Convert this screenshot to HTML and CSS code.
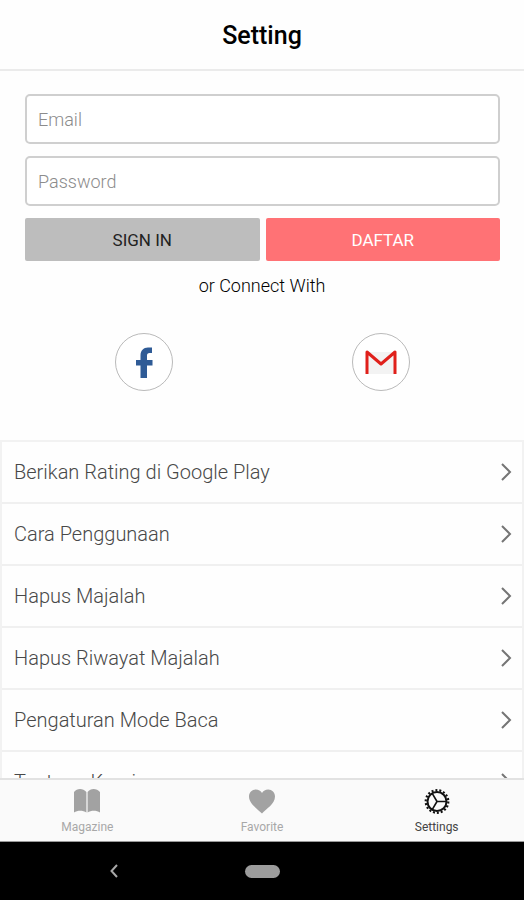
FILE: index.html
```html
<!DOCTYPE html>
<html lang="id">
<head>
<meta charset="utf-8">
<meta name="viewport" content="width=device-width, initial-scale=1">
<title>Setting</title>
<link rel="stylesheet" href="styles.css">
</head>
<body>
<header class="header"><h1 class="title">Setting</h1></header>
<main class="content">
  <form class="login">
    <input class="field" type="email" placeholder="Email" aria-label="Email">
    <input class="field" type="password" placeholder="Password" aria-label="Password">
    <div class="actions">
      <button class="button" type="button">SIGN IN</button>
      <button class="button button-primary" type="button">DAFTAR</button>
    </div>
  </form>
  <p class="connect">or Connect With</p>
  <div class="social">
    <button class="social-button" type="button" aria-label="Facebook">
      <svg width="56" height="56" viewBox="0 0 56 56"><path fill="#2f5b96" d="M24.500 44V31.500H20V26h4.500v-4.500c0-5 3-8 7.500-8h4v5.500h-2.500c-1.800 0-2.500 1-2.500 2.500V26h5.500v5.500H31V44z"/></svg>
    </button>
    <button class="social-button" type="button" aria-label="Gmail">
      <svg width="56" height="56" viewBox="0 0 56 56"><path fill="#f3f3f3" d="M14 18h27v22H14z"/><path fill="none" stroke="#e0201b" stroke-width="3" stroke-linejoin="round" d="M14 40V18l14 12 14-12v22"/></svg>
    </button>
  </div>
  <nav class="menu" aria-label="Setting">
    <a class="row" href="#rating">Berikan Rating di Google Play<svg class="chevron" viewBox="0 0 11 18"><path d="M1 1l8 8-8 8"/></svg></a>
    <a class="row" href="#cara">Cara Penggunaan<svg class="chevron" viewBox="0 0 11 18"><path d="M1 1l8 8-8 8"/></svg></a>
    <a class="row" href="#hapus">Hapus Majalah<svg class="chevron" viewBox="0 0 11 18"><path d="M1 1l8 8-8 8"/></svg></a>
    <a class="row" href="#riwayat">Hapus Riwayat Majalah<svg class="chevron" viewBox="0 0 11 18"><path d="M1 1l8 8-8 8"/></svg></a>
    <a class="row" href="#mode">Pengaturan Mode Baca<svg class="chevron" viewBox="0 0 11 18"><path d="M1 1l8 8-8 8"/></svg></a>
    <a class="row" href="#tentang">Tentang Kami<svg class="chevron" viewBox="0 0 11 18"><path d="M1 1l8 8-8 8"/></svg></a>
  </nav>
</main>
<nav class="tabs" aria-label="Tab">
  <a class="tab" href="#magazine">
    <svg width="26" height="26" viewBox="0 0 26 26"><path fill="#a2a2a2" d="M0 4c3-4 9-4 12.400 0v20.500c-3.400-2.500-9-2.500-12.400 0zM13.600 4c3-4 9-4 12.400 0v20.500c-3.400-2.500-9-2.500-12.400 0z"/></svg>
    Magazine
  </a>
  <a class="tab" href="#favorite">
    <svg width="26" height="26" viewBox="0 0 26 26"><path fill="#a2a2a2" d="M13 25.500C9 21 0 16 0 8.500 0 4.500 3 1.500 6.800 1.500c2.700 0 5 1.300 6.200 3.500 1.200-2.200 3.500-3.500 6.200-3.500C23 1.500 26 4.500 26 8.500 26 16 17 21 13 25.500z"/></svg>
    Favorite
  </a>
  <a class="tab tab-active" href="#settings">
    <svg width="26" height="26" viewBox="0 0 26 26" fill="none" stroke="#111"><circle cx="13" cy="13.500" r="9.500" stroke-width="2"/><circle cx="13" cy="13.500" r="11.300" stroke-width="2.200" stroke-dasharray="2 1.944"/><path stroke-width="1.600" d="M13 13.500h9.500M13 13.500l-4.800-8.200M13 13.500l-4.800 8.200"/></svg>
    Settings
  </a>
</nav>
<footer class="system">
  <button class="system-key" type="button" aria-label="Back"><svg width="8" height="14" viewBox="0 0 8 14"><path fill="none" stroke="#a8a8a8" stroke-width="2" d="M7 1L1.500 7 7 13"/></svg></button>
  <button class="system-key" type="button" aria-label="Home"><span class="pill"></span></button>
</footer>
</body>
</html>
```
FILE: styles.css
```css
* { box-sizing: border-box; }
body {
  margin: 0;
  height: 100vh;
  display: flex;
  flex-direction: column;
  background: #fefefe;
  color: #222;
  font-family: Roboto, "Liberation Sans", sans-serif;
}
button, input { font: inherit; }
a { color: inherit; text-decoration: none; }
.header {
  flex: none;
  padding: 21px 0 18px;
  border-bottom: 2px solid #ebebeb;
  text-align: center;
}
.title {
  margin: 0;
  color: #000;
  font-size: 25px;
  font-weight: 500;
  line-height: 30px;
}
.content {
  flex: 1;
  min-height: 0;
  overflow: hidden;
}
.login {
  display: grid;
  gap: 12px;
  padding: 23px 24px 0 25px;
}
.field {
  width: 100%;
  height: 50px;
  padding: 0 11px;
  border: 2px solid #cfcfcf;
  border-radius: 5px;
  background: #fff;
  color: #222;
  font-size: 18px;
}
.field::placeholder { color: #8c8c8c; font-weight: 300; opacity: 1; }
.actions {
  display: grid;
  grid-template-columns: 1fr 1fr;
  gap: 6px;
}
.button {
  height: 43px;
  padding: 0;
  border: 0;
  border-radius: 2px;
  background: #bdbdbd;
  color: #222;
  font-size: 17px;
}
.button-primary { background: #ff7275; color: #fff; }
.connect {
  margin: 13px 0 0;
  color: #000;
  font-size: 18px;
  font-weight: 300;
  line-height: 24px;
  text-align: center;
}
.social {
  display: grid;
  grid-template-columns: 1fr 1fr;
  justify-items: center;
  padding: 35px 25px 49px;
}
.social-button {
  width: 58px;
  height: 58px;
  padding: 0;
  border: 1px solid #bababa;
  border-radius: 50%;
  background: #fff;
}
.social-button svg { display: block; }
.menu {
  border: 2px solid #f2f2f2;
  border-bottom: 0;
}
.row {
  display: flex;
  align-items: center;
  justify-content: space-between;
  height: 62px;
  padding: 0 10px 0 12px;
  border-bottom: 2px solid #f0f0f0;
  color: #484848;
  font-size: 20px;
  font-weight: 300;
}
.chevron {
  width: 11px;
  height: 18px;
  fill: none;
  stroke: #757575;
  stroke-width: 2;
}
.tabs {
  flex: none;
  display: grid;
  grid-template-columns: repeat(3, 1fr);
  height: 64px;
  border-top: 2px solid #e2e2e2;
  border-bottom: 1px solid #999;
  background: #fafafa;
}
.tab {
  display: flex;
  flex-direction: column;
  align-items: center;
  gap: 5px;
  padding-top: 8px;
  color: #a8a8a8;
  font-size: 12px;
  line-height: 16px;
}
.tab-active { color: #444; }
.system {
  flex: none;
  display: grid;
  grid-template-columns: 1fr 70px 1fr;
  height: 58px;
  background: #000;
}
.system-key {
  display: grid;
  place-items: center;
  padding: 0;
  border: 0;
  background: none;
}
.pill {
  width: 35px;
  height: 13px;
  border-radius: 7px;
  background: #9c9c9c;
}
```
